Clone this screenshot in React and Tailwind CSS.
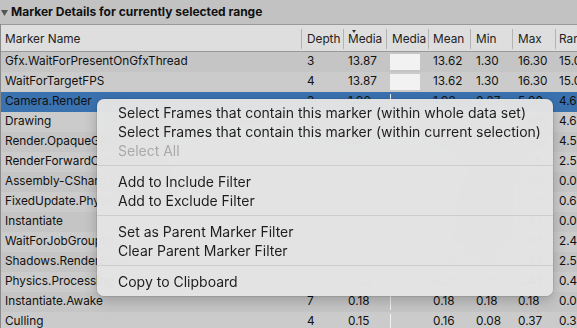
import React from "react";

const rows = [
  { n: "Gfx.WaitForPresentOnGfxThread", d: "3", m: "13.87", box: true, mean: "13.62", min: "1.30", max: "16.30", r: "15.0" },
  { n: "WaitForTargetFPS", d: "4", m: "13.87", box: true, mean: "13.62", min: "1.30", max: "16.30", r: "15.0" },
  { n: "Camera.Render", d: "3", m: "1.90", mean: "1.92", min: "0.27", max: "5.00", r: "4.6", sel: true },
  { n: "Drawing", d: "4", m: "1.88", mean: "1.90", min: "0.26", max: "4.98", r: "4.6" },
  { n: "Render.OpaqueGeometry", d: "5", m: "1.76", mean: "1.80", min: "0.24", max: "4.80", r: "4.5" },
  { n: "RenderForwardOpaque.Render", d: "6", m: "1.10", mean: "1.12", min: "0.20", max: "2.75", r: "2.5" },
  { n: "Assembly-CSharp.dll!::Update", d: "3", m: "0.92", mean: "0.92", min: "0.90", max: "0.95", r: "0.0" },
  { n: "FixedUpdate.PhysicsFixedUpdate", d: "3", m: "0.45", mean: "0.50", min: "0.10", max: "0.75", r: "0.6" },
  { n: "Instantiate", d: "4", m: "0.40", mean: "0.40", min: "0.39", max: "0.41", r: "0.0" },
  { n: "WaitForJobGroupID", d: "5", m: "0.30", mean: "0.45", min: "0.02", max: "2.45", r: "2.4" },
  { n: "Shadows.RenderShadowMap", d: "5", m: "0.28", mean: "0.40", min: "0.05", max: "2.57", r: "2.5" },
  { n: "Physics.Processing", d: "4", m: "0.22", mean: "0.25", min: "0.05", max: "0.47", r: "0.4" },
  { n: "Instantiate.Awake", d: "7", m: "0.18", mean: "0.18", min: "0.18", max: "0.18", r: "0.0" },
  { n: "Culling", d: "4", m: "0.15", mean: "0.16", min: "0.08", max: "0.37", r: "0.3" },
];

function HeaderCell({ w, label, pl, arrow, last }) {
  return (
    <div className={`${w} flex shrink-0 h-full relative`}>
      <div className={`flex-1 ${pl} flex items-end pb-[2px] relative overflow-hidden whitespace-nowrap`}>
        {label}
        {arrow && (
          <svg className="absolute top-[5px] left-[8px]" width="4" height="3" viewBox="0 0 4 3">
            <path d="M0 0 L4 0 L2 3 Z" fill="#333" />
          </svg>
        )}
      </div>
      {!last && <div className="w-px h-[20px] self-end mb-[2px] bg-[#b3b3b3]" />}
    </div>
  );
}

function MenuItem({ children, disabled }) {
  return (
    <div className={`h-[19px] flex items-center pl-[21px] whitespace-nowrap ${disabled ? "text-[#a9a9a9]" : "text-[#1e1e1e]"}`}>
      {children}
    </div>
  );
}

function Sep() {
  return (
    <div className="pt-[5px] pb-[6px]">
      <div className="h-px bg-[#cdcdcd]" />
    </div>
  );
}

export default function App() {
  return (
    <div className="w-[577px] h-[328px] overflow-hidden bg-[#c2c2c2] relative text-[#111]" style={{ fontFamily: "Inter, 'Noto Sans', sans-serif" }}>
      <div className="h-[24px] flex items-center pl-[1px] gap-[3px] font-bold text-[12px]">
        <svg width="7" height="7" viewBox="0 0 7 7" className="mt-[1px]">
          <path d="M0 1 L7 1 L3.5 7 Z" fill="#555" />
        </svg>
        <span>Marker Details for currently selected range</span>
      </div>
      <div className="border-l border-[#8a8a8a]">
        <div className="h-[28px] bg-[#dedede] border-t border-b border-[#9a9a9a] flex text-[11.8px] text-[#222]">
          <HeaderCell w="w-[301px]" label="Marker Name" pl="pl-[4px]" />
          <HeaderCell w="w-[42px]" label="Depth" pl="pl-[5px]" />
          <HeaderCell w="w-[43px]" label="Media" pl="pl-[4px]" arrow />
          <HeaderCell w="w-[42px]" label="Media" pl="pl-[5px]" />
          <HeaderCell w="w-[42px]" label="Mean" pl="pl-[4px]" />
          <HeaderCell w="w-[42px]" label="Min" pl="pl-[5px]" />
          <HeaderCell w="w-[43px]" label="Max" pl="pl-[5px]" />
          <HeaderCell w="w-[40px]" label="Range" pl="pl-[3px]" last />
        </div>
        {rows.map((r, i) => (
          <div
            key={i}
            className={`h-[20px] flex items-center text-[11.8px] whitespace-nowrap ${
              r.sel ? "bg-[#3a72b0]" : i % 2 === 0 ? "bg-[#c5c5c5]" : "bg-[#cbcbcb]"
            }`}
          >
            <div className="w-[301px] shrink-0 pl-[4px] overflow-hidden">{r.n}</div>
            <div className="w-[42px] shrink-0 pl-[5px]">{r.d}</div>
            <div className="w-[43px] shrink-0 pl-[4px]">{r.m}</div>
            <div className="w-[42px] shrink-0 pl-[3px] h-full py-[2px]">
              {r.box ? <div className="w-[30px] h-full bg-[#f2f2f2]" /> : <div className="w-px h-full bg-[#f2f2f2]" />}
            </div>
            <div className="w-[42px] shrink-0 pl-[4px]">{r.mean}</div>
            <div className="w-[42px] shrink-0 pl-[5px]">{r.min}</div>
            <div className="w-[43px] shrink-0 pl-[5px]">{r.max}</div>
            <div className="w-[40px] shrink-0 pl-[3px]">{r.r}</div>
          </div>
        ))}
      </div>

      <div className="absolute left-[97px] top-[99px] w-[456px] rounded-[7px] bg-[rgba(228,228,228,0.96)] backdrop-blur-xl shadow-[0_4px_14px_rgba(0,0,0,0.22)] ring-1 ring-[rgba(0,0,0,0.08)] pt-[4px] pb-[5px] text-[14px]">
        <MenuItem>Select Frames that contain this marker (within whole data set)</MenuItem>
        <MenuItem>Select Frames that contain this marker (within current selection)</MenuItem>
        <MenuItem disabled>Select All</MenuItem>
        <Sep />
        <MenuItem>Add to Include Filter</MenuItem>
        <MenuItem>Add to Exclude Filter</MenuItem>
        <Sep />
        <MenuItem>Set as Parent Marker Filter</MenuItem>
        <MenuItem>Clear Parent Marker Filter</MenuItem>
        <Sep />
        <MenuItem>Copy to Clipboard</MenuItem>
      </div>
    </div>
  );
}
